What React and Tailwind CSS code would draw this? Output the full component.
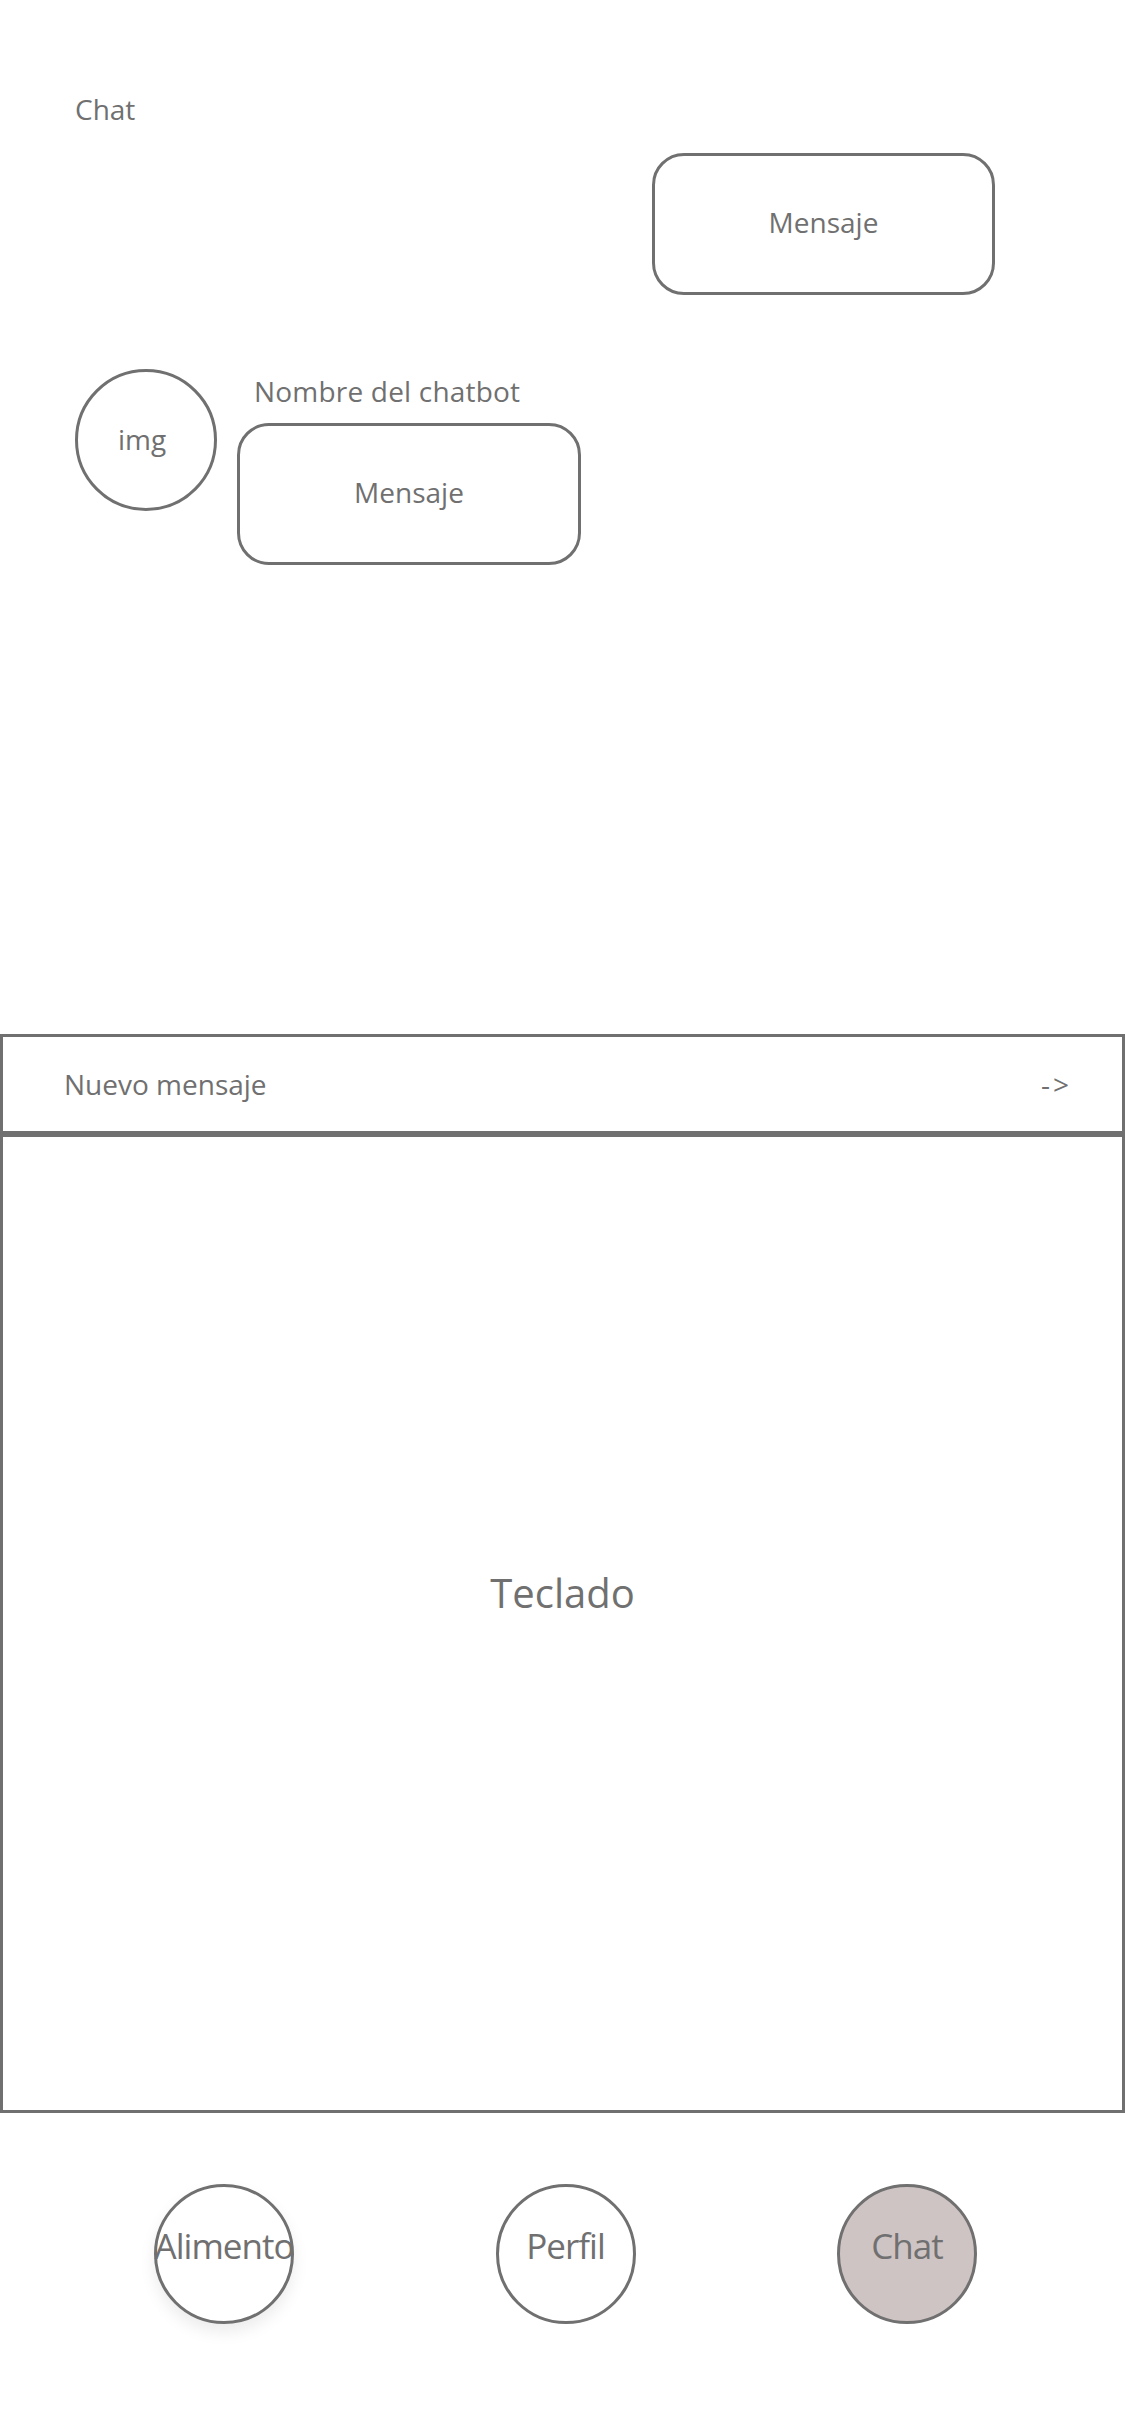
import React from "react";

const font = { fontFamily: '"Open Sans", "Noto Sans", sans-serif' };

function NavButton({ label, active, shadow }) {
  return (
    <div
      className={`w-[140px] h-[140px] rounded-full border-[3px] border-[#707070] flex justify-center pt-[38px] ${
        active ? "bg-[#cfc4c4]" : "bg-white"
      } ${shadow ? "shadow-[0_8px_16px_rgba(0,0,0,0.08)]" : ""}`}
    >
      <span className="text-[35px] leading-[42px] tracking-[-1px] whitespace-nowrap">{label}</span>
    </div>
  );
}

function App() {
  return (
    <div className="w-[1125px] h-[2436px] bg-white text-[#707070] flex flex-col overflow-hidden" style={font}>
      {/* CABECERA */}
      <div className="pt-[90px] pl-[75px] text-[28px] leading-[38px]">Chat</div>

      {/* MENSAJE USUARIO */}
      <div className="mt-[25px] ml-[652px] w-[343px] h-[142px] rounded-[32px] border-[3px] border-[#707070] flex items-center justify-center pb-[4px] text-[28px]">
        Mensaje
      </div>

      {/* MENSAJE CHATBOT */}
      <div className="mt-[74px] ml-[75px] flex gap-[20px]">
        <div className="w-[142px] h-[142px] rounded-full border-[3px] border-[#707070] flex items-center justify-center pr-[8px] pb-[2px] text-[28px]">
          img
        </div>
        <div className="flex flex-col">
          <div className="pl-[17px] text-[28px] leading-[44px] tracking-[0.2px]">Nombre del chatbot</div>
          <div className="mt-[10px] w-[344px] h-[142px] rounded-[32px] border-[3px] border-[#707070] flex items-center justify-center pb-[4px] text-[28px]">
            Mensaje
          </div>
        </div>
      </div>

      {/* INPUT */}
      <div className="mt-[469px] h-[100px] border-[3px] border-[#707070] flex items-center justify-between pl-[61px] pr-[50px] text-[28px]">
        <span>Nuevo mensaje</span>
        <span className="tracking-[3px]">-&gt;</span>
      </div>

      {/* TECLADO */}
      <div className="h-[979px] border-[3px] border-[#707070] flex items-center justify-center pb-[62px] text-[40px]">
        Teclado
      </div>

      {/* NAV */}
      <div className="mt-[71px] flex justify-between pl-[154px] pr-[148px]">
        <NavButton label="Alimento" shadow />
        <NavButton label="Perfil" />
        <NavButton label="Chat" active />
      </div>
    </div>
  );
}

export default App;
